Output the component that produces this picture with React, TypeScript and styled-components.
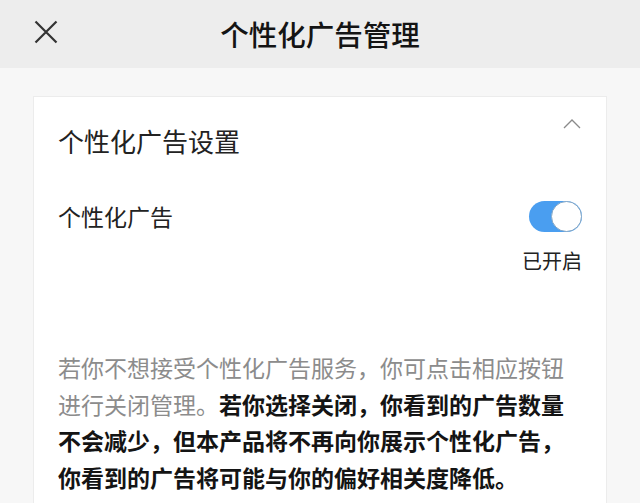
import React, { useState } from "react";
import styled, { createGlobalStyle } from "styled-components";

const GlobalStyle = createGlobalStyle`
  html, body {
    margin: 0;
    padding: 0;
    background: #f7f7f7;
  }
  body {
    font-family: "Noto Sans CJK SC", "Noto Sans", sans-serif;
    color: #1a1a1a;
  }
`;

export default function App() {
  const [enabled, setEnabled] = useState(true);

  return (
    <>
      <GlobalStyle />
      <page.wrap>
        <header.wrap>
          <header.close aria-label="close">
            <svg width="24" height="24" viewBox="0 0 24 24">
              <path d="M1.5 1.5 L22.5 22.5 M22.5 1.5 L1.5 22.5" stroke="#333" strokeWidth="2.2" fill="none" />
            </svg>
          </header.close>
          <header.title>个性化广告管理</header.title>
        </header.wrap>

        <card.wrap>
          <card.head>
            <card.title>个性化广告设置</card.title>
            <card.chevron>
              <svg width="18" height="11" viewBox="0 0 18 11">
                <path d="M1 10 L9 2 L17 10" stroke="#8a8a8a" strokeWidth="1.3" fill="none" />
              </svg>
            </card.chevron>
          </card.head>

          <setting.row>
            <setting.label>个性化广告</setting.label>
            <setting.side>
              <Toggle $on={enabled} onClick={() => setEnabled(!enabled)}>
                <Knob $on={enabled} />
              </Toggle>
              <setting.status>{enabled ? "已开启" : "已关闭"}</setting.status>
            </setting.side>
          </setting.row>

          <Notice>
            <span className="muted">若你不想接受个性化广告服务，你可点击相应按钮进行关闭管理。</span>
            <strong>若你选择关闭，你看到的广告数量不会减少，但本产品将不再向你展示个性化广告，你看到的广告将可能与你的偏好相关度降低。</strong>
          </Notice>
        </card.wrap>
      </page.wrap>
    </>
  );
}

const page = {
  wrap: styled.div`
    width: 640px;
    height: 503px;
    overflow: hidden;
    background: #f7f7f7;
  `,
};

const header = {
  wrap: styled.div`
    position: relative;
    height: 68px;
    background: #ededed;
    display: flex;
    align-items: center;
    justify-content: center;
  `,
  close: styled.button`
    position: absolute;
    left: 34px;
    top: 20px;
    width: 24px;
    height: 24px;
    padding: 0;
    border: none;
    background: none;
    display: flex;
  `,
  title: styled.h1`
    margin: 0;
    font-size: 28.5px;
    font-weight: 500;
    line-height: 36px;
    color: #141414;
  `,
};

const card = {
  wrap: styled.div`
    margin: 28px 33px 0 33px;
    background: #fff;
    border: 1px solid #ececec;
    border-bottom: none;
    padding: 21px 24px 40px 24px;
    box-sizing: border-box;
  `,
  head: styled.div`
    display: flex;
    justify-content: space-between;
    align-items: flex-start;
  `,
  title: styled.h2`
    margin: 5px 0 0 0;
    font-size: 26px;
    font-weight: 400;
    line-height: 36px;
    color: #222;
  `,
  chevron: styled.div`
    display: flex;
    margin-right: 1px;
  `,
};

const setting = {
  row: styled.div`
    display: flex;
    justify-content: space-between;
    align-items: flex-start;
    margin-top: 42px;
  `,
  label: styled.div`
    font-size: 23px;
    line-height: 31px;
    color: #222;
  `,
  side: styled.div`
    display: flex;
    flex-direction: column;
    align-items: flex-end;
    gap: 15px;
  `,
  status: styled.div`
    font-size: 20px;
    line-height: 28px;
    color: #222;
  `,
};

const Toggle = styled.div<{ $on: boolean }>`
  width: 53px;
  height: 31px;
  border-radius: 16px;
  background: ${(p) => (p.$on ? "#4a9ef0" : "#d9d9d9")};
  display: flex;
  justify-content: ${(p) => (p.$on ? "flex-end" : "flex-start")};
  cursor: pointer;
`;

const Knob = styled.div<{ $on: boolean }>`
  width: 31px;
  height: 31px;
  box-sizing: border-box;
  border-radius: 50%;
  background: #fff;
  border: 1.5px solid #86a8c6;
`;

const Notice = styled.p`
  margin: 74px 0 0 0;
  font-size: 23px;
  line-height: 36.5px;
  color: #141414;

  .muted {
    color: #8c8c8c;
  }
  strong {
    font-weight: 700;
  }
`;
